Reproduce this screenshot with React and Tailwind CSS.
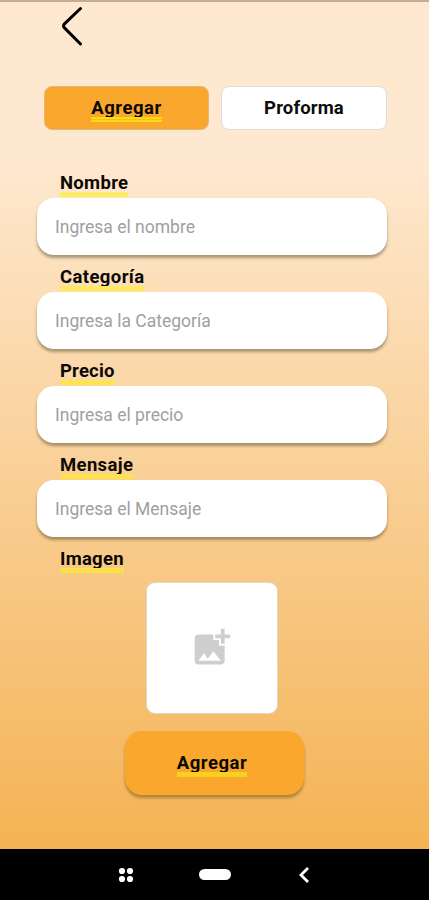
import React from 'react';
import { MdAddPhotoAlternate } from 'react-icons/md';

const FIELDS = [
  { label: 'Nombre', placeholder: 'Ingresa el nombre', spacing: 'tracking-[0.3px]', line: 'after:bg-[#ffec66]' },
  { label: 'Categoría', placeholder: 'Ingresa la Categoría', spacing: 'tracking-[0.4px]', line: 'after:bg-[#ffea60]' },
  { label: 'Precio', placeholder: 'Ingresa el precio', spacing: 'tracking-[0.2px]', line: 'after:bg-[#fde455]' },
  { label: 'Mensaje', placeholder: 'Ingresa el Mensaje', spacing: 'tracking-[0.35px]', line: 'after:bg-[#fce24c]' },
];

// Bold text with a thick yellow line that covers the descenders
function Underlined({ children, className = '', line }) {
  return (
    <span
      className={`relative inline-block font-bold text-[18.5px] leading-[22px] text-[#0c0803] after:absolute after:left-0 after:right-0 after:top-[20px] after:h-[5px] ${line} ${className}`}
    >
      {children}
    </span>
  );
}

function Field({ label, placeholder, spacing, line }) {
  return (
    <div className="h-[94px]">
      <div className="h-[26px] pl-[23px] flex items-start">
        <Underlined className={spacing} line={line}>{label}</Underlined>
      </div>
      <input
        type="text"
        placeholder={placeholder}
        className="block w-[350px] h-[57px] rounded-[17px] bg-white pl-[18px] pt-[1px] text-[17.5px] text-black placeholder:text-[#a0a0a0] outline-none shadow-[0_3px_3px_rgba(90,80,50,0.5)]"
      />
    </div>
  );
}

export default function App() {
  return (
    <div className="w-[429px] h-[900px] flex flex-col overflow-hidden font-[Roboto,sans-serif] bg-black">
      <main className="h-[849px] px-[37px] border-t-2 border-[#c4ad94] bg-[linear-gradient(180deg,#fee8cf_0%,#fee8cf_19%,#f4b354_100%)]">
        <button aria-label="Volver" className="block ml-[23px] mt-[4px]">
          <svg width="24" height="41" viewBox="0 0 24 41" fill="none" stroke="#000" strokeWidth="3" strokeLinecap="round" strokeLinejoin="round">
            <path d="M20.5 2.5L4.2 18.2Q2.9 19.9 4.2 21.6L20.5 38" />
          </svg>
        </button>

        <div className="mt-[39px] ml-[7px] flex gap-[12px]">
          <button className="w-[165px] h-[44px] rounded-[8px] border border-[#e3b77b] bg-[#f9a72d] flex items-center justify-center">
            <Underlined
              className="tracking-[0.5px]"
              line="after:bg-[linear-gradient(180deg,#fbdc12_0_2px,#faba22_2px_3px,#fbdc12_3px_5px)]"
            >
              Agregar
            </Underlined>
          </button>
          <button className="w-[166px] h-[44px] rounded-[8px] border border-[#dedbdc] bg-white flex items-center justify-center text-[18.5px] leading-[22px] font-bold tracking-[0.15px] text-[#0c0c0c]">
            Proforma
          </button>
        </div>

        <form className="mt-[42px]">
          {FIELDS.map((f) => (
            <Field key={f.label} {...f} />
          ))}
          <div className="h-[34px] pl-[23px]">
            <Underlined className="tracking-[0.25px]" line="after:bg-[#fbe146]">Imagen</Underlined>
          </div>
          <div className="ml-[109px] w-[132px] h-[132px] rounded-[9px] border border-[#e0d6c8] bg-white flex items-center justify-center">
            <MdAddPhotoAlternate size={45} color="#cecece" className="-mt-px mr-px" />
          </div>
          <button
            type="button"
            className="mt-[17px] ml-[88px] w-[179px] h-[64px] rounded-[17px] bg-[#f9a72d] pr-[5px] shadow-[0_3px_3px_rgba(110,80,30,0.5)] flex items-center justify-center"
          >
            <Underlined className="tracking-[0.5px]" line="after:bg-[#f8d01f]">Agregar</Underlined>
          </button>
        </form>
      </main>

      <nav className="h-[51px] bg-black flex items-center">
        <svg className="ml-[118px]" width="16" height="16" viewBox="0 0 16 16" fill="#fff">
          <circle cx="4" cy="4" r="3.1" />
          <circle cx="12" cy="4" r="3.1" />
          <circle cx="4" cy="12" r="3.1" />
          <circle cx="12" cy="12" r="3.1" />
        </svg>
        <span className="ml-[65px] w-[32px] h-[11px] rounded-full bg-white" />
        <svg className="ml-[67px]" width="12" height="18" viewBox="0 0 12 18" fill="none" stroke="#fff" strokeWidth="2.8">
          <path d="M10 2L3 9L10 16" />
        </svg>
      </nav>
    </div>
  );
}
